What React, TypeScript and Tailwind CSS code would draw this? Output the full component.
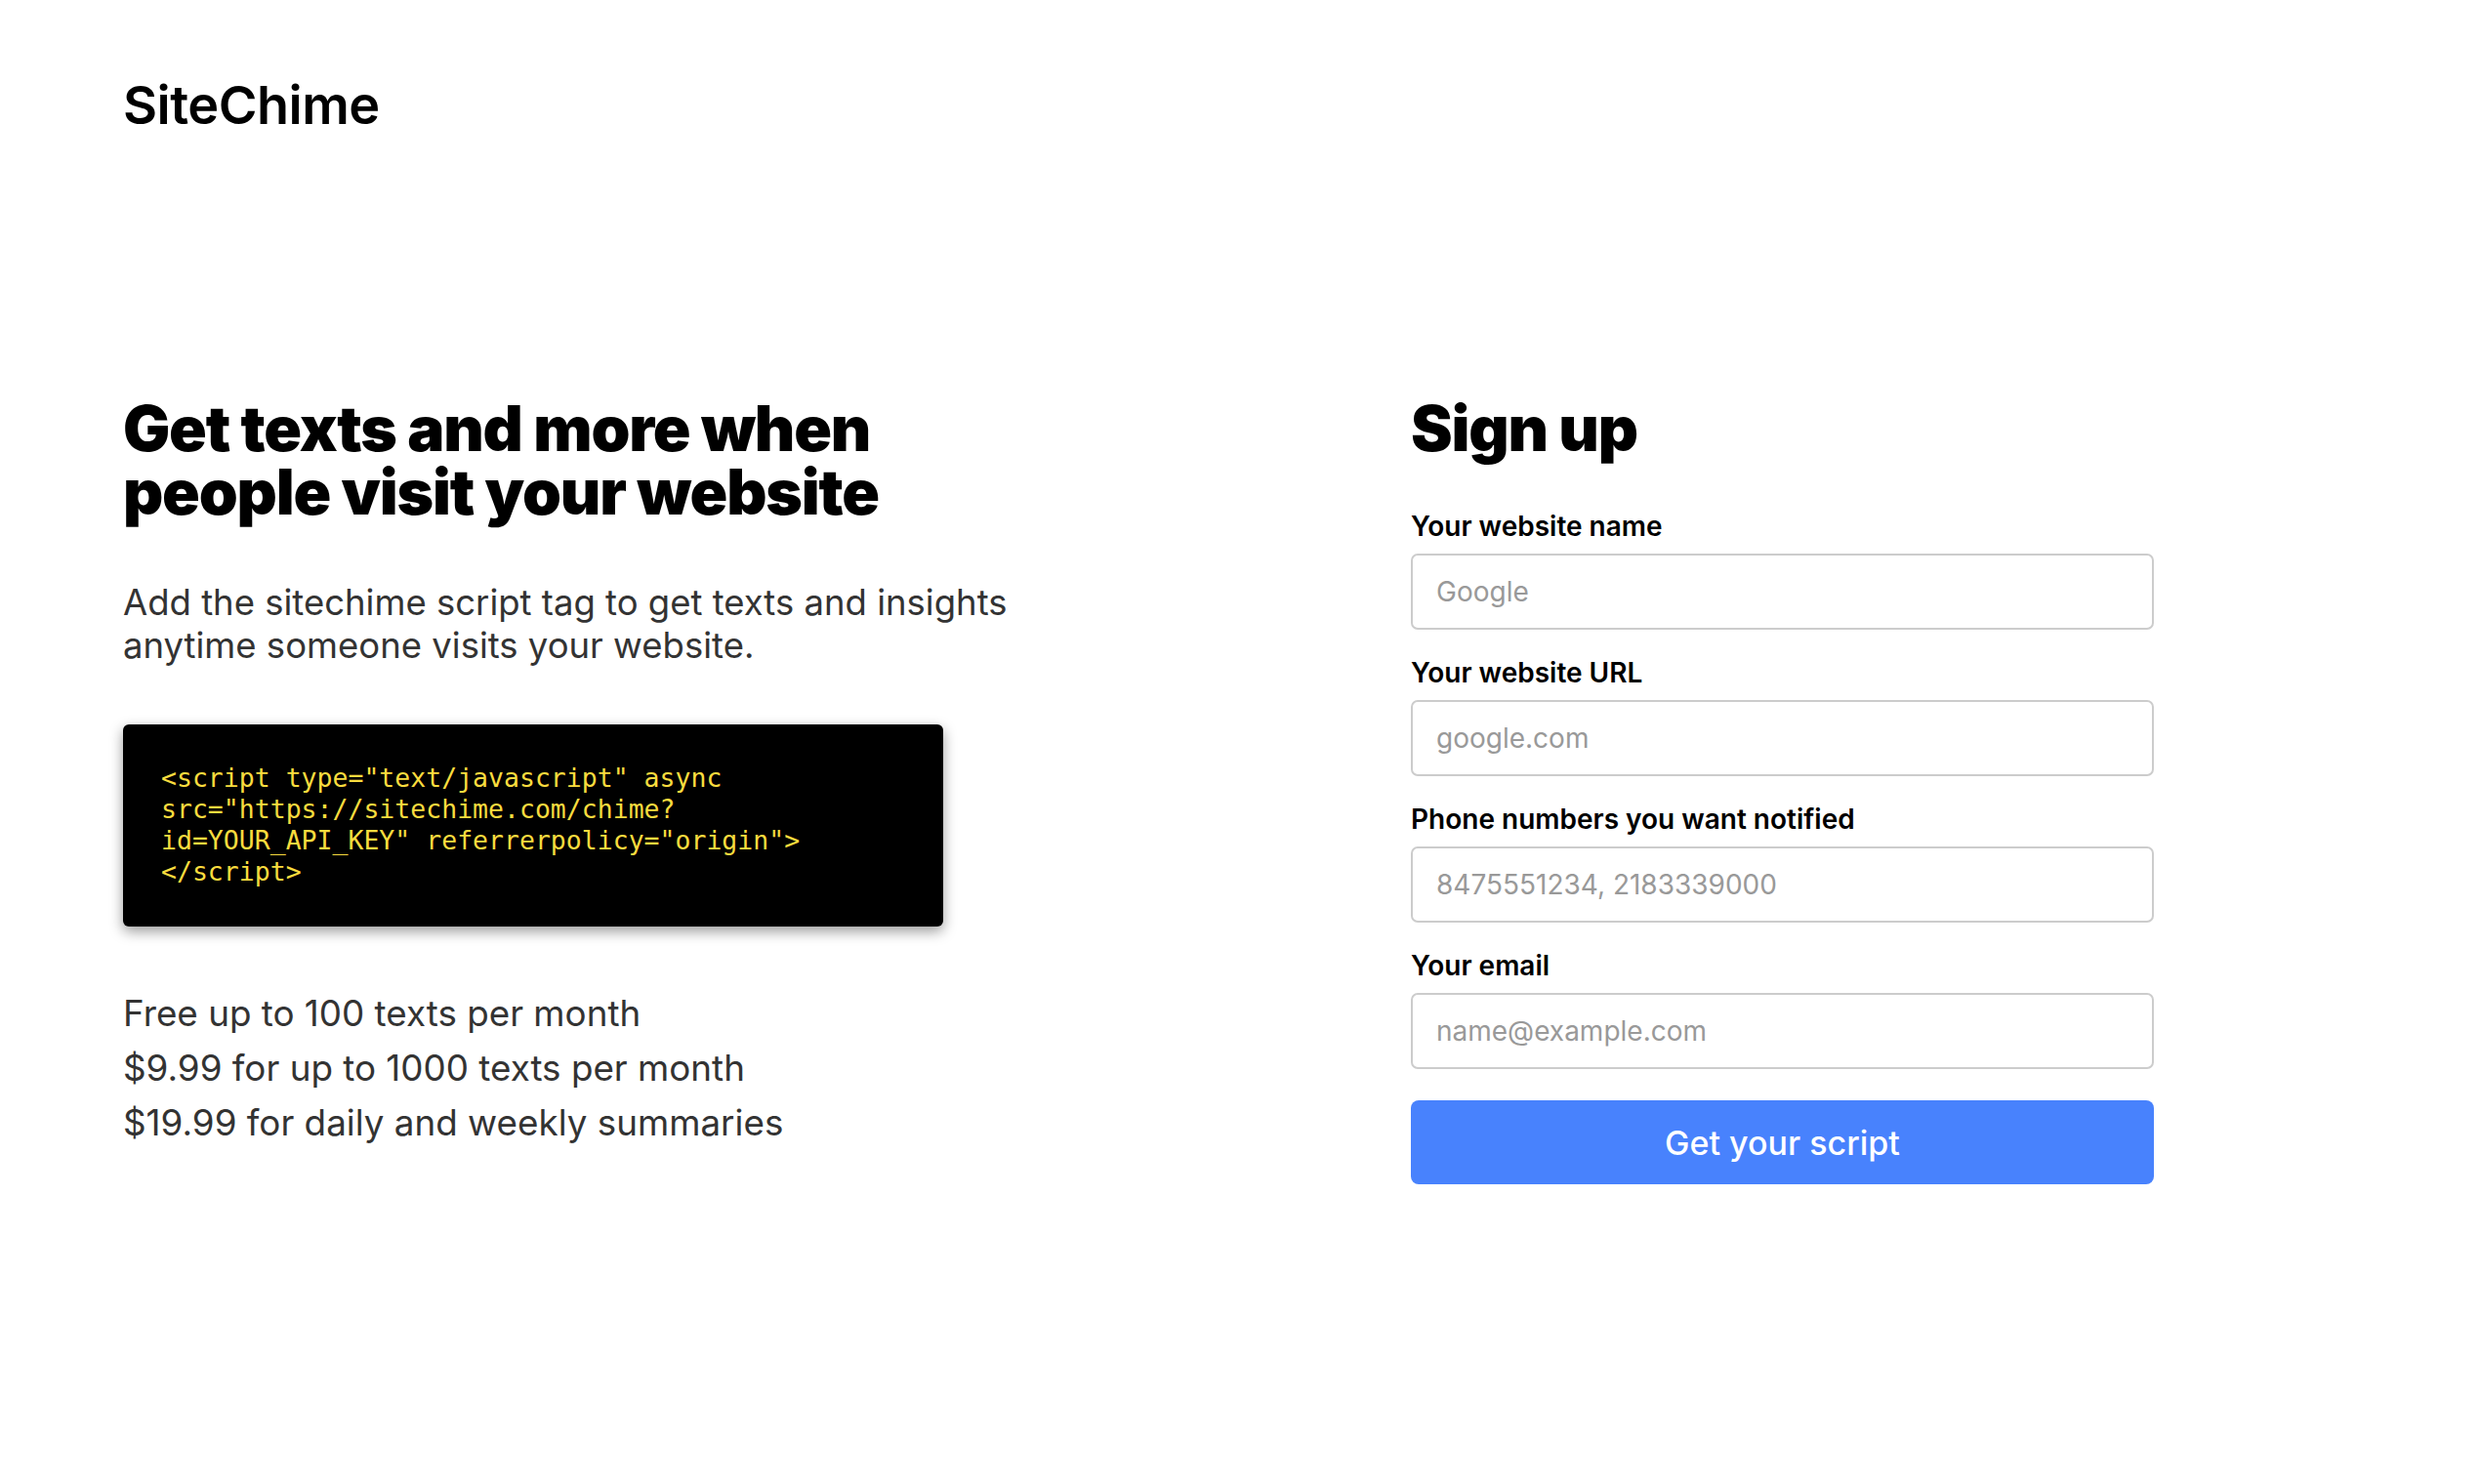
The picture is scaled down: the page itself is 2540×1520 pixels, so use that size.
import React from "react";

const fields = [
  { label: "Your website name", placeholder: "Google" },
  { label: "Your website URL", placeholder: "google.com" },
  { label: "Phone numbers you want notified", placeholder: "8475551234, 2183339000" },
  { label: "Your email", placeholder: "name@example.com" },
];

export default function App() {
  return (
    <div className="min-h-screen bg-white font-['Inter',sans-serif] text-black px-[126px] pt-[81px]">
      <div className="text-[54px] leading-[54px] font-semibold tracking-[-0.5px]">SiteChime</div>
      <div className="flex mt-[271px]">
        <div className="w-[1319px] shrink-0">
          <h1 className="text-[64px] leading-[65px] font-black tracking-[-1.2px]">
            Get texts and more when
            <br />
            people visit your website
          </h1>
          <p className="mt-[59px] text-[36.5px] leading-[44px] text-[#333]">
            Add the sitechime script tag to get texts and insights
            <br />
            anytime someone visits your website.
          </p>
          <div className="mt-[59px] w-[840px] rounded-[6px] bg-black px-[39px] pt-[39px] pb-[40px] shadow-[0_5px_14px_rgba(0,0,0,0.4)]">
            <pre className="font-['DejaVu_Sans_Mono',monospace] text-[26.5px] leading-[32px] text-[#f9dc3e] whitespace-pre">
{`<script type="text/javascript" async
src="https://sitechime.com/chime?
id=YOUR_API_KEY" referrerpolicy="origin">
</script>`}
            </pre>
          </div>
          <div className="mt-[61px] text-[36.8px] leading-[56px] text-[#333]">
            <p>Free up to 100 texts per month</p>
            <p>$9.99 for up to 1000 texts per month</p>
            <p>$19.99 for daily and weekly summaries</p>
          </div>
        </div>
        <div className="w-[761px] shrink-0">
          <h2 className="text-[64px] leading-[65px] font-black tracking-[-1.2px]">Sign up</h2>
          <div className="mt-[50px] flex flex-col gap-[26px]">
            {fields.map((f) => (
              <div key={f.label} className="flex flex-col gap-[10px]">
                <label className="text-[28px] leading-[36px] font-semibold">{f.label}</label>
                <input
                  placeholder={f.placeholder}
                  className="h-[78px] w-full rounded-[7px] border-2 border-[#cccccc] bg-white px-[24px] text-[28px] outline-none placeholder:text-[#999999]"
                />
              </div>
            ))}
          </div>
          <button className="mt-[32px] h-[86px] w-full rounded-[8px] bg-[#4882fd] text-[34px] font-medium text-white">
            Get your script
          </button>
        </div>
      </div>
    </div>
  );
}
